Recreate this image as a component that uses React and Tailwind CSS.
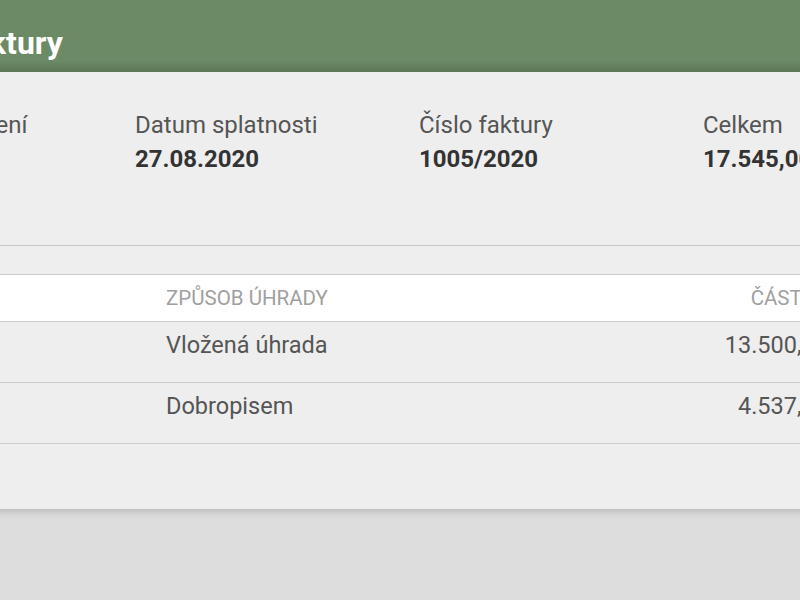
export default function App() {
  const info = [
    { label: "Datum vystavení", value: "13.08.2020" },
    { label: "Datum splatnosti", value: "27.08.2020" },
    { label: "Číslo faktury", value: "1005/2020" },
    { label: "Celkem", value: "17.545,00 Kč" },
  ];
  const rows = [
    { date: "20.08.2020", method: "Vložená úhrada", amount: "13.500,00" },
    { date: "25.08.2020", method: "Dobropisem", amount: "4.537,00" },
  ];
  return (
    <div className="w-[800px] h-[600px] overflow-hidden bg-[#dddddd] font-['Roboto',sans-serif]">
      <div className="ml-[-180px] w-[1040px] bg-[#eeeeee] shadow-[0_2px_8px_rgba(0,0,0,0.18)]">
        <div className="h-[72px] bg-[linear-gradient(to_bottom,#6d8a67_0%,#6d8a67_84%,#5c7656_100%)] pl-[31px] pt-[25px]">
          <div className="text-[32px] leading-[36px] font-bold text-white">Úhrady faktury</div>
        </div>
        <div className="flex pl-[31px] pt-[39px] h-[174px] border-b border-[#c8c8c8]">
          {info.map((c) => (
            <div key={c.label} className="w-[284px] shrink-0">
              <div className="text-[24px] leading-[28px] text-[#555555]">{c.label}</div>
              <div className="mt-[6px] text-[24px] leading-[28px] font-bold text-[#333333]">{c.value}</div>
            </div>
          ))}
        </div>
        <div className="h-[28px]" />
        <div className="border-t border-[#cccccc]">
          <div className="flex items-center h-[47px] bg-white border-b border-[#cccccc] pl-[31px] pr-[32px] text-[20.5px] uppercase text-[#a0a0a0]">
            <div className="w-[315px] shrink-0">Datum</div>
            <div className="flex-1">Způsob úhrady</div>
            <div className="text-right">Částka</div>
          </div>
          {rows.map((r) => (
            <div key={r.method} className="flex h-[61px] pt-[9px] border-b border-[#cccccc] pl-[31px] pr-[32px] text-[23.5px] leading-[28px] text-[#555555]">
              <div className="w-[315px] shrink-0">{r.date}</div>
              <div className="flex-1">{r.method}</div>
              <div className="text-right">{r.amount}</div>
            </div>
          ))}
        </div>
        <div className="h-[65px]" />
      </div>
    </div>
  );
}
